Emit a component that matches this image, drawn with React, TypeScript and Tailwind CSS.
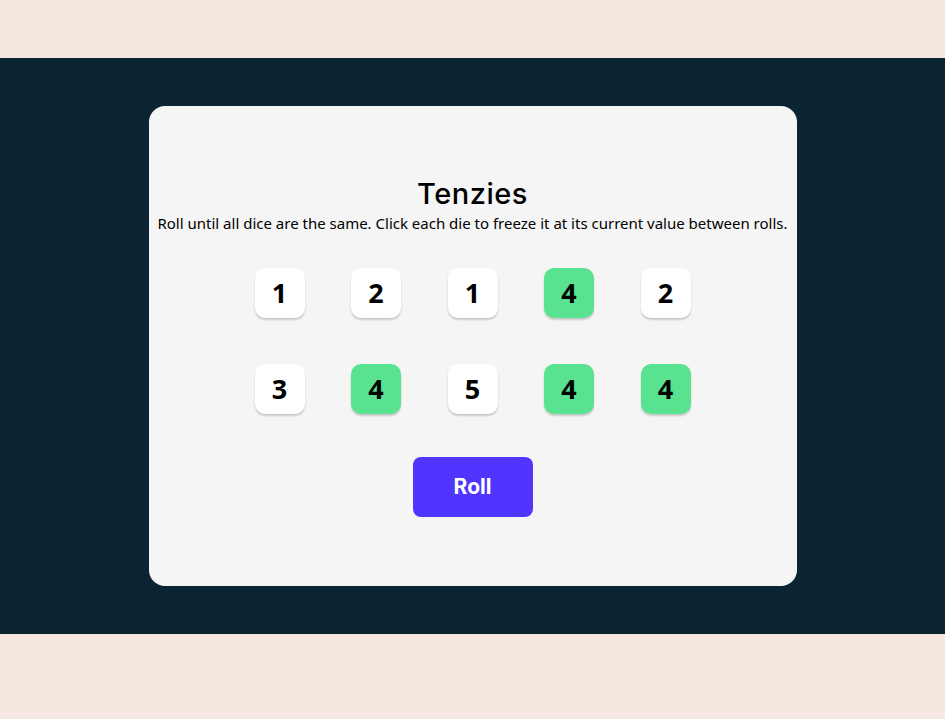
import { useState } from "react";

type Die = { value: number; held: boolean };

const start: Die[] = [
  { value: 1, held: false },
  { value: 2, held: false },
  { value: 1, held: false },
  { value: 4, held: true },
  { value: 2, held: false },
  { value: 3, held: false },
  { value: 4, held: true },
  { value: 5, held: false },
  { value: 4, held: true },
  { value: 4, held: true },
];

export default function App() {
  const [dice, setDice] = useState<Die[]>(start);

  function hold(i: number) {
    setDice((d) => d.map((x, j) => (j === i ? { ...x, held: !x.held } : x)));
  }

  function roll() {
    setDice((d) =>
      d.map((x) => (x.held ? x : { ...x, value: Math.ceil(Math.random() * 6) }))
    );
  }

  return (
    <div className="min-h-[719px] bg-[#F5E8E0] flex flex-col">
      <div className="h-[58px]" />
      {/* dark band */}
      <div className="h-[576px] bg-[#0B2434] flex justify-center pt-[48px]">
        <main className="w-[648px] h-[480px] bg-[#F5F5F5] rounded-[16px] flex flex-col items-center pt-[72px]">
          <h1 className="font-['Inter',sans-serif] font-medium text-[29px] leading-[32px] tracking-[0.5px] text-black">
            Tenzies
          </h1>
          <p className="font-['Noto_Sans',sans-serif] text-[15px] leading-[22px] text-black mt-[2px]">
            Roll until all dice are the same. Click each die to freeze it at its current value between rolls.
          </p>

          <div className="grid grid-cols-[repeat(5,50px)] gap-x-[46.5px] gap-y-[46px] mt-[34px]">
            {dice.map((d, i) => (
              <button
                key={i}
                onClick={() => hold(i)}
                className={
                  "w-[50px] h-[50px] rounded-[10px] shadow-[0_2px_2px_rgba(0,0,0,0.18)] flex items-center justify-center font-['Noto_Sans',sans-serif] font-bold text-[27px] text-black " +
                  (d.held ? "bg-[#59E391]" : "bg-white")
                }
              >
                {d.value}
              </button>
            ))}
          </div>

          <button
            onClick={roll}
            className="mt-[43px] w-[120px] h-[60px] bg-[#5035FF] rounded-[8px] text-white font-['Inter',sans-serif] font-bold text-[21px]"
          >
            Roll
          </button>
        </main>
      </div>
      <div className="flex-1" />
    </div>
  );
}
